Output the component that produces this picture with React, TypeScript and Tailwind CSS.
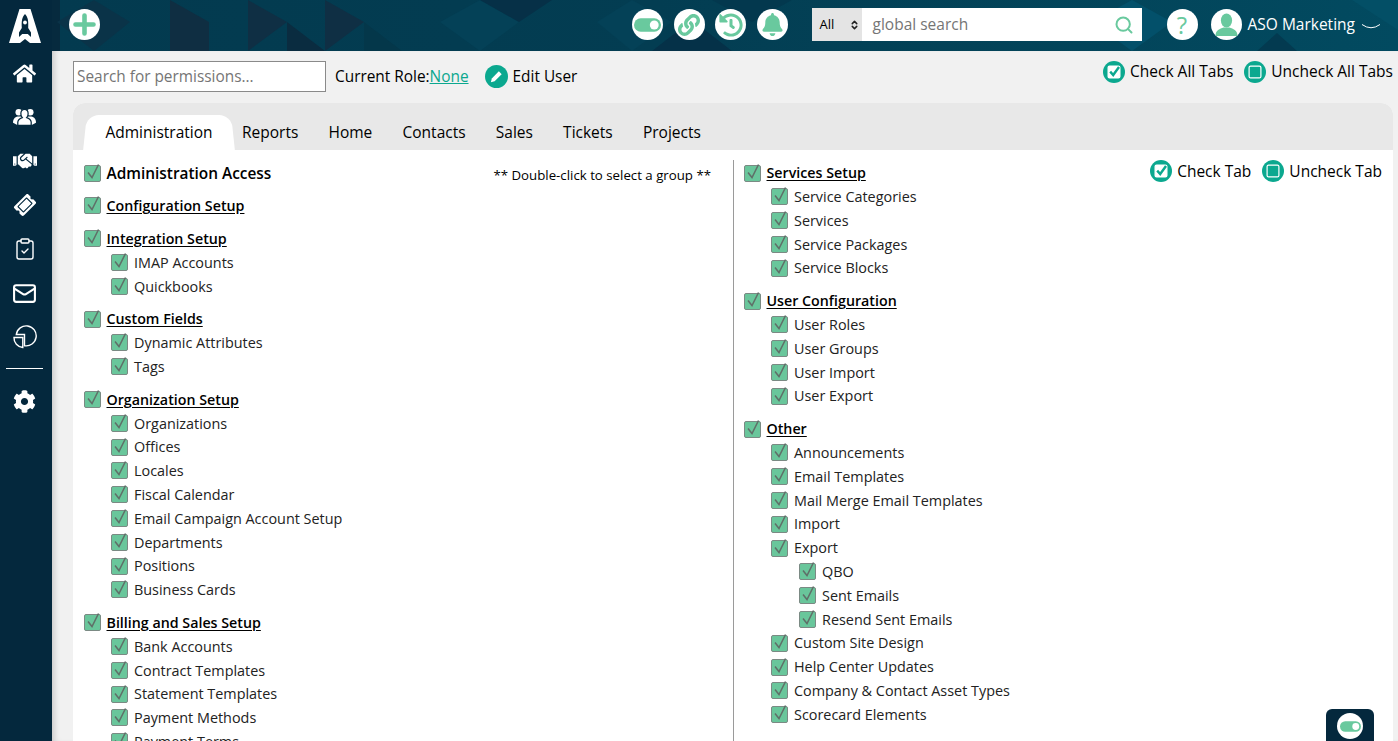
import { FaHome, FaHandshake, FaTicketAlt, FaCog, FaBell, FaLink, FaHistory } from 'react-icons/fa';
import { ClipboardCheck, Mail, ChevronDown, ChevronUp, Search } from 'lucide-react';

type Item = { label: string; level?: number };
type Group = { title: string; items?: Item[] };

const leftGroups: Group[] = [
  { title: 'Configuration Setup' },
  { title: 'Integration Setup', items: [{ label: 'IMAP Accounts' }, { label: 'Quickbooks' }] },
  { title: 'Custom Fields', items: [{ label: 'Dynamic Attributes' }, { label: 'Tags' }] },
  {
    title: 'Organization Setup',
    items: ['Organizations', 'Offices', 'Locales', 'Fiscal Calendar', 'Email Campaign Account Setup', 'Departments', 'Positions', 'Business Cards'].map((label) => ({ label })),
  },
  {
    title: 'Billing and Sales Setup',
    items: ['Bank Accounts', 'Contract Templates', 'Statement Templates', 'Payment Methods', 'Payment Terms'].map((label) => ({ label })),
  },
];

const rightGroups: Group[] = [
  { title: 'User Configuration', items: ['User Roles', 'User Groups', 'User Import', 'User Export'].map((label) => ({ label })) },
  {
    title: 'Other',
    items: [
      { label: 'Announcements' },
      { label: 'Email Templates' },
      { label: 'Mail Merge Email Templates' },
      { label: 'Import' },
      { label: 'Export' },
      { label: 'QBO', level: 2 },
      { label: 'Sent Emails', level: 2 },
      { label: 'Resend Sent Emails', level: 2 },
      { label: 'Custom Site Design' },
      { label: 'Help Center Updates' },
      { label: 'Company & Contact Asset Types' },
      { label: 'Scorecard Elements' },
    ],
  },
];

const tabs = ['Reports', 'Home', 'Contacts', 'Sales', 'Tickets', 'Projects'];

function Check() {
  return (
    <span className="relative block w-[17px] h-[17px] shrink-0 rounded-[2px] bg-[#69c69b] border border-[#7b8a84]">
      <svg viewBox="0 0 17 20" className="absolute left-[-1px] top-[-4px] w-[17px] h-[20px]" fill="none">
        <path d="M4 10.5 L8 15.5 L14.5 2.5" stroke="#5f6f68" strokeWidth="1.5" />
      </svg>
    </span>
  );
}

function Row({ label, level = 0, head = false }: { label: string; level?: number; head?: boolean }) {
  const indent = level === 0 ? 'pl-0' : level === 1 ? 'pl-[27px]' : 'pl-[55px]';
  return (
    <div className={`h-[23.8px] flex items-center ${indent}`}>
      <Check />
      <span className={head ? 'ml-[5.5px] text-[14.25px] font-semibold underline underline-offset-2 text-black' : 'ml-[6px] text-[#222]'}>{label}</span>
    </div>
  );
}

function GroupBlock({ group }: { group: Group }) {
  return (
    <div className="mt-[9px]">
      <Row label={group.title} head />
      {group.items?.map((item) => (
        <Row key={item.label} label={item.label} level={item.level ?? 1} />
      ))}
    </div>
  );
}

function TealCheck({ checked }: { checked: boolean }) {
  return (
    <svg viewBox="0 0 22 22" className="w-[22px] h-[22px] shrink-0">
      <circle cx="11" cy="11" r="11" fill="#0ba88f" />
      <rect x="5.1" y="5.1" width="11.8" height="11.8" rx="1.5" fill={checked ? '#fff' : 'none'} stroke="#fff" strokeWidth="1.2" />
      {checked && <path d="M7.2 10.6 L10.2 14 L16 6" fill="none" stroke="#0ba88f" strokeWidth="2.4" />}
    </svg>
  );
}

function RoundIcon({ children }: { children: React.ReactNode }) {
  return <div className="w-[31px] h-[31px] rounded-full bg-white flex items-center justify-center text-[#69c99e] shrink-0 overflow-hidden">{children}</div>;
}

function Toggle({ className }: { className: string }) {
  return (
    <svg viewBox="0 0 28 14" className={className}>
      <rect width="28" height="14" rx="7" fill="#69c99e" />
      <circle cx="21" cy="7" r="4.6" fill="#fff" />
    </svg>
  );
}

function Logo() {
  return (
    <svg viewBox="0 0 32 34" className="w-[32px] h-[34px]">
      <path d="M10.5 0 H21.5 L32 34 H21 L16 30 L11 34 H0 Z" fill="#fff" />
      <path d="M16 5 C19 8 19.6 12 19.2 19 L22 23.5 L22 28 L18.8 25 H13.2 L10 28 L10 23.5 L12.8 19 C12.4 12 13 8 16 5 Z" fill="#04283d" />
      <circle cx="16" cy="13.5" r="1.9" fill="#fff" />
    </svg>
  );
}

function PeopleIcon() {
  return (
    <svg viewBox="0 0 24 20" className="w-[23px] h-[20px]" fill="#fff">
      <circle cx="6" cy="5" r="3.4" />
      <circle cx="18" cy="5" r="3.4" />
      <path d="M0 16 C0 11 3 9.5 6 9.5 H18 C21 9.5 24 11 24 16 L20 18 H4 Z" />
      <path d="M12 2 C14.6 2 15.8 4.2 15.8 6.5 C15.8 8.4 15 9.8 14.3 10.6 C16.6 11.4 19 12.6 19 15.6 V18.8 H5 V15.6 C5 12.6 7.4 11.4 9.7 10.6 C9 9.8 8.2 8.4 8.2 6.5 C8.2 4.2 9.4 2 12 2 Z" stroke="#04283d" strokeWidth="1.3" fill="#fff" />
    </svg>
  );
}

function PieIcon() {
  return (
    <svg viewBox="0 0 24 24" className="w-[24px] h-[24px]" fill="none" stroke="#fff" strokeWidth="1.4">
      <path d="M3.3 9.5 H11.5 V20.7 A10 10 0 1 0 3.3 9.5 Z" />
      <path d="M1 12.5 H9.8 V22.5 A9.5 9.5 0 0 1 1 12.5 Z" />
    </svg>
  );
}

function HeaderPattern() {
  return (
    <svg viewBox="0 0 1346 51" preserveAspectRatio="none" className="absolute inset-0 w-full h-full">
      <defs>
        <linearGradient id="headerBase" x1="0" y1="0" x2="1" y2="0">
          <stop offset="0" stopColor="#033a4f" />
          <stop offset="0.45" stopColor="#033d52" />
          <stop offset="1" stopColor="#024a60" />
        </linearGradient>
      </defs>
      <rect width="1346" height="51" fill="url(#headerBase)" />
      <polygon points="0,0 8,0 8,51 0,51" fill="#062a3e" />
      <polygon points="42,0 78,22 42,51 5,22" fill="#0a3348" />
      <polygon points="118,0 157,22 157,51 118,51" fill="#0f2e42" />
      <polygon points="196,0 235,22 196,51" fill="#0f2f44" />
      <polygon points="235,22 273,51 235,51" fill="#0a2c40" />
      <polygon points="273,0 312,22 273,51" fill="#0f2f44" />
      <polygon points="312,22 350,51 312,51" fill="#04374a" />
      <polygon points="388,22 428,0 467,22 428,51" fill="#044157" />
      <polygon points="428,0 500,0 467,22" fill="#063047" />
      <polygon points="545,22 580,0 620,22 580,51" fill="#044157" />
      <polygon points="600,51 640,20 680,51" fill="#053148" />
      <polygon points="660,0 700,22 740,0" fill="#03384e" />
      <polygon points="1040,22 1080,0 1120,22 1080,51" fill="#03506a" />
      <polygon points="1225,33 1245,51 1205,51" fill="#033a50" />
      <polygon points="1300,0 1346,0 1346,30" fill="#034f66" />
    </svg>
  );
}

export default function App() {
  return (
    <div className="flex h-[741px] overflow-hidden bg-[#f1f1f1] text-[14.4px] text-black" style={{ fontFamily: '"Open Sans", sans-serif' }}>
      <aside className="w-[52px] shrink-0 bg-[#04283d] flex flex-col items-center pr-[3px] text-white">
        <div className="h-[51px] flex items-center justify-center">
          <Logo />
        </div>
        <div className="flex flex-col items-center">
          <div className="h-[44px] flex items-center"><FaHome size={23} /></div>
          <div className="h-[44px] flex items-center"><PeopleIcon /></div>
          <div className="h-[44px] flex items-center"><FaHandshake size={24} /></div>
          <div className="h-[44px] flex items-center"><FaTicketAlt size={20} className="-rotate-45" /></div>
          <div className="h-[44px] flex items-center"><ClipboardCheck size={24} strokeWidth={1.4} /></div>
          <div className="h-[44px] flex items-center"><Mail size={25} strokeWidth={2} /></div>
          <div className="h-[44px] flex items-center"><PieIcon /></div>
        </div>
        <div className="w-[37px] h-px bg-white mt-[9px]" />
        <div className="h-[65px] flex items-center"><FaCog size={23} /></div>
      </aside>

      <div className="flex-1 min-w-0 flex flex-col">
        <header className="relative h-[51px] shrink-0">
          <HeaderPattern />
          <div className="relative h-full flex items-center pl-[17px] pb-[2px]">
            <RoundIcon>
              <svg viewBox="0 0 31 31" className="w-[31px] h-[31px]">
                <path d="M15.5 6.5 V24.5 M6.5 15.5 H24.5" stroke="#69c99e" strokeWidth="4.6" strokeLinecap="round" />
              </svg>
            </RoundIcon>
            <div className="ml-[532px] flex items-center gap-[10.5px]">
              <RoundIcon><Toggle className="w-[27px] h-[14px]" /></RoundIcon>
              <RoundIcon><FaLink size={22} /></RoundIcon>
              <RoundIcon><FaHistory size={24} /></RoundIcon>
              <RoundIcon><FaBell size={23} /></RoundIcon>
            </div>
            <div className="ml-[24px] w-[330px] h-[33px] bg-white flex items-center">
              <div className="w-[50px] h-full bg-[#e4e4e4] flex items-center justify-between pl-[8px] pr-[3px] text-[13px]">
                <span>All</span>
                <span className="flex flex-col items-center -space-y-[4px] text-[#222]">
                  <ChevronUp size={9} strokeWidth={4} />
                  <ChevronDown size={9} strokeWidth={4} />
                </span>
              </div>
              <span className="ml-[11px] flex-1 text-[15.5px] text-[#757575]">global search</span>
              <Search size={20} strokeWidth={2.4} className="mr-[8px] text-[#69c99e]" />
            </div>
            <div className="ml-[25px]">
              <RoundIcon><span className="text-[24px] leading-none">?</span></RoundIcon>
            </div>
            <div className="ml-[13px]">
              <RoundIcon>
                <svg viewBox="0 0 31 31" className="w-[31px] h-[31px]" fill="#69c99e">
                  <ellipse cx="15.5" cy="11.5" rx="5.6" ry="7" />
                  <path d="M4.5 27 C4.5 21 9 20 12.5 18.5 H18.5 C22 20 26.5 21 26.5 27 Z" />
                </svg>
              </RoundIcon>
            </div>
            <span className="ml-[6px] text-[15.5px] text-white whitespace-nowrap">ASO Marketing</span>
            <svg viewBox="0 0 20 8" className="ml-[6px] mt-[5px] w-[20px] h-[8px] shrink-0" fill="none" stroke="#fff" strokeWidth="1">
              <path d="M1 1.5 Q10 8 19 1.5" />
            </svg>
          </div>
        </header>

        <main className="relative flex-1 min-h-0 pl-[21px] pr-[5px] shadow-[inset_6px_0_6px_-4px_rgba(0,0,0,0.18)]">
          <div className="h-[52px] flex items-start justify-between text-[15.4px]">
            <div className="flex items-center mt-[10px] h-[31px]">
              <div className="w-[253px] h-[31px] bg-white border border-[#8a8a8a] flex items-center pl-[3px] text-[#757575]">Search for permissions...</div>
              <span className="ml-[9px]">Current Role:</span>
              <span className="underline text-[#0ba88f]">None</span>
              <span className="ml-[16px] w-[23px] h-[23px] rounded-full bg-[#0ba88f] flex items-center justify-center">
                <svg viewBox="0 0 16 16" className="w-[15px] h-[15px]" fill="#fff"><path d="M2 14 L3 10 L10.5 2.5 L13.5 5.5 L6 13 Z" /></svg>
              </span>
              <span className="ml-[5px]">Edit User</span>
            </div>
            <div className="flex items-center mt-[9px] text-[15.5px]">
              <TealCheck checked />
              <span className="ml-[5px]">Check All Tabs</span>
              <span className="ml-[11px]"><TealCheck checked={false} /></span>
              <span className="ml-[5px]">Uncheck All Tabs</span>
            </div>
          </div>

          <section className="rounded-t-[12px] bg-white h-[639px] overflow-hidden flex flex-col">
            <nav className="h-[47px] shrink-0 bg-[#e8e8e8] flex items-end pl-[12px] text-[15.5px]">
              <div className="relative h-[35px] w-[148px] flex items-center justify-center">
                <span className="absolute inset-y-0 left-0 w-[55%] bg-white rounded-tl-[12px] -skew-x-6" />
                <span className="absolute inset-y-0 right-0 w-[55%] bg-white rounded-tr-[12px] skew-x-6" />
                <span className="relative">Administration</span>
              </div>
              <div className="flex items-center h-[35px] ml-[9px] gap-[30.2px]">
                {tabs.map((t) => (
                  <span key={t}>{t}</span>
                ))}
              </div>
            </nav>

            <div className="relative flex-1 min-h-0 flex">
              <div className="w-[660px] shrink-0 pl-[11px] pt-[11.3px]">
                <div className="h-[23.8px] flex items-center justify-between pr-[22px]">
                  <div className="flex items-center">
                    <Check />
                    <span className="ml-[5.5px] text-[15.4px] font-semibold">Administration Access</span>
                  </div>
                  <span className="text-[13.25px] mt-[5px]">** Double-click to select a group **</span>
                </div>
                {leftGroups.map((g) => (
                  <GroupBlock key={g.title} group={g} />
                ))}
              </div>

              <div className="flex-1 min-w-0 border-l border-[#9a9a9a] mt-[10px] pl-[10px] pt-[1.2px] flex justify-between">
                <div>
                  <Row label="Services Setup" head />
                  {['Service Categories', 'Services', 'Service Packages', 'Service Blocks'].map((s) => (
                    <Row key={s} label={s} level={1} />
                  ))}
                  {rightGroups.map((g) => (
                    <GroupBlock key={g.title} group={g} />
                  ))}
                </div>
                <div className="flex items-start pr-[11px] text-[15.5px] -mt-[1px]">
                  <TealCheck checked />
                  <span className="ml-[5px]">Check Tab</span>
                  <span className="ml-[11px]"><TealCheck checked={false} /></span>
                  <span className="ml-[5px]">Uncheck Tab</span>
                </div>
              </div>
            </div>
          </section>

          <div className="absolute right-[24px] bottom-0 w-[48px] h-[32px] bg-[#04283d] rounded-t-[6px] flex items-start justify-center pt-[4px]">
            <span className="w-[26px] h-[26px] rounded-full bg-white flex items-center justify-center">
              <Toggle className="w-[21px] h-[11px]" />
            </span>
          </div>
        </main>
      </div>
    </div>
  );
}
